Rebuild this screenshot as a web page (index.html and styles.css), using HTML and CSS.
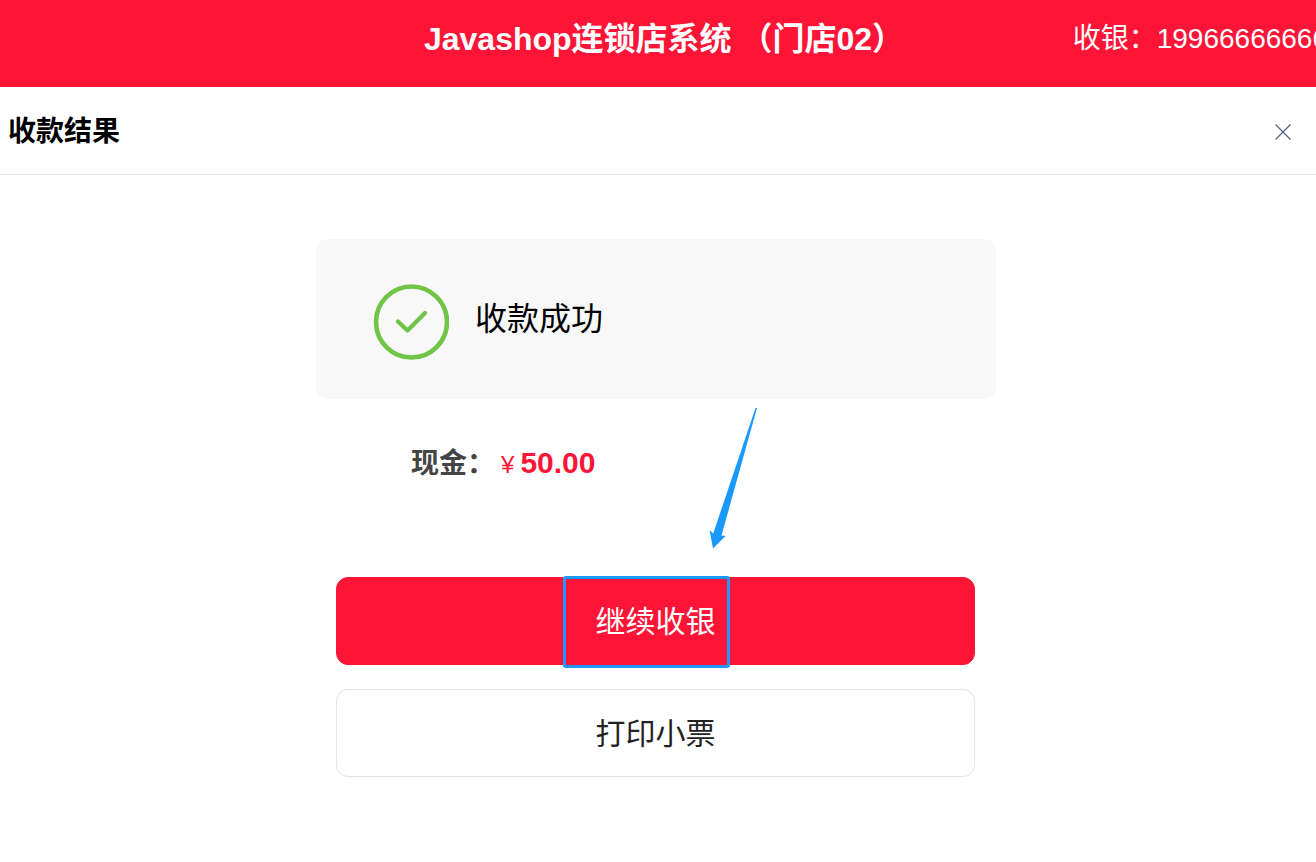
FILE: index.html
```html
<!DOCTYPE html>
<html lang="zh-CN">
<head>
<meta charset="utf-8">
<meta name="viewport" content="width=device-width, initial-scale=1">
<title>收款结果</title>
<link rel="stylesheet" href="styles.css">
</head>
<body>
<header class="topbar">
  <h1 class="topbar-title">Javashop连锁店系统 （门店02）</h1>
  <span class="topbar-user">收银：19966666666</span>
</header>
<section class="dialog">
  <div class="dialog-head">
    <h2 class="dialog-title">收款结果</h2>
    <button class="close" type="button" aria-label="关闭">
      <svg width="16" height="16" viewBox="0 0 16 16" fill="none" stroke="#4f6482" stroke-width="1.2"><path d="M.5 .5l15 15M15.5 .5l-15 15"/></svg>
    </button>
  </div>
  <div class="dialog-body">
    <div class="status">
      <svg class="status-icon" width="76" height="76" viewBox="0 0 76 76" fill="none" stroke="#70c446" stroke-linecap="round" stroke-linejoin="round">
        <circle cx="38.500" cy="38" r="35.500" stroke-width="4.6"/>
        <path d="M25 37.500L34.500 46.500L52 29" stroke-width="4.2"/>
      </svg>
      <span class="status-text">收款成功</span>
    </div>
    <div class="amount">
      <span class="amount-label">现金：</span>
      <span class="amount-sign">¥</span>
      <span class="amount-value">50.00</span>
    </div>
    <div class="actions">
      <button class="btn btn-primary" type="button">继续收银<span class="highlight"></span></button>
      <button class="btn btn-plain" type="button">打印小票</button>
    </div>
    <svg class="arrow" width="50" height="142" viewBox="0 0 50 142" fill="#1a9aff"><path d="M48 0L46.500 0L4.200 125.500L.5 122L4 140.500L16.500 128L12.500 127.500Z"/></svg>
  </div>
</section>
</body>
</html>
```
FILE: styles.css
```css
* {
  box-sizing: border-box;
}

body {
  margin: 0;
  background: #fff;
  color: #000;
  font-family: "Liberation Sans", "Noto Sans CJK SC", sans-serif;
  overflow-x: hidden;
}

button {
  font-family: inherit;
  cursor: pointer;
}

.topbar {
  display: grid;
  grid-template-columns: minmax(0, 1fr) auto minmax(0, 1fr);
  padding: 15px 0 24px 12px;
  background: #fe1437;
  color: #fff;
  line-height: 48px;
  white-space: nowrap;
  overflow: hidden;
}

.topbar-title {
  grid-column: 2;
  margin: 0;
  font-size: 32px;
}

.topbar-user {
  justify-self: end;
  margin-right: -12px;
  font-size: 28px;
}

.dialog-head {
  display: flex;
  align-items: center;
  justify-content: space-between;
  padding: 23px 20px 21px 8px;
  border-bottom: 1px solid #e4e4e4;
}

.dialog-title {
  margin: 0;
  font-size: 28px;
  line-height: 43px;
}

.close {
  display: flex;
  padding: 5px;
  border: 0;
  background: none;
}

.dialog-body {
  position: relative;
  max-width: 684px;
  margin: 0 auto;
  padding: 64px 4px 64px 0;
}

.status {
  display: flex;
  align-items: center;
  gap: 26px;
  padding: 45px 57px 39px;
  border-radius: 12px;
  background: #f8f8f8;
}

.status-text {
  padding-bottom: 12px;
  font-size: 32px;
}

.amount {
  display: flex;
  align-items: baseline;
  padding: 40px 95px;
  color: #fe1437;
  line-height: 48px;
}

.amount-label {
  color: #444;
  font-size: 28px;
  font-weight: 700;
}

.amount-sign {
  margin: 0 6px;
  font-size: 24px;
}

.amount-value {
  font-size: 30px;
  font-weight: 700;
}

.actions {
  display: grid;
  gap: 24px;
  padding: 48px 21px 0 20px;
}

.btn {
  position: relative;
  height: 88px;
  padding: 0 0 4px;
  border: 1px solid #fe1437;
  border-radius: 12px;
  font-size: 30px;
}

.btn-primary {
  background: #fe1437;
  color: #fff;
}

.btn-plain {
  border-color: #e4e4e4;
  background: #fff;
  color: #222;
}

.highlight {
  position: absolute;
  top: -2px;
  bottom: -4px;
  left: calc(50% - 93px);
  width: 167px;
  border: 3px solid #1a9aff;
  border-radius: 3px;
}

.arrow {
  position: absolute;
  top: 233px;
  left: calc(50% + 51px);
}
```
